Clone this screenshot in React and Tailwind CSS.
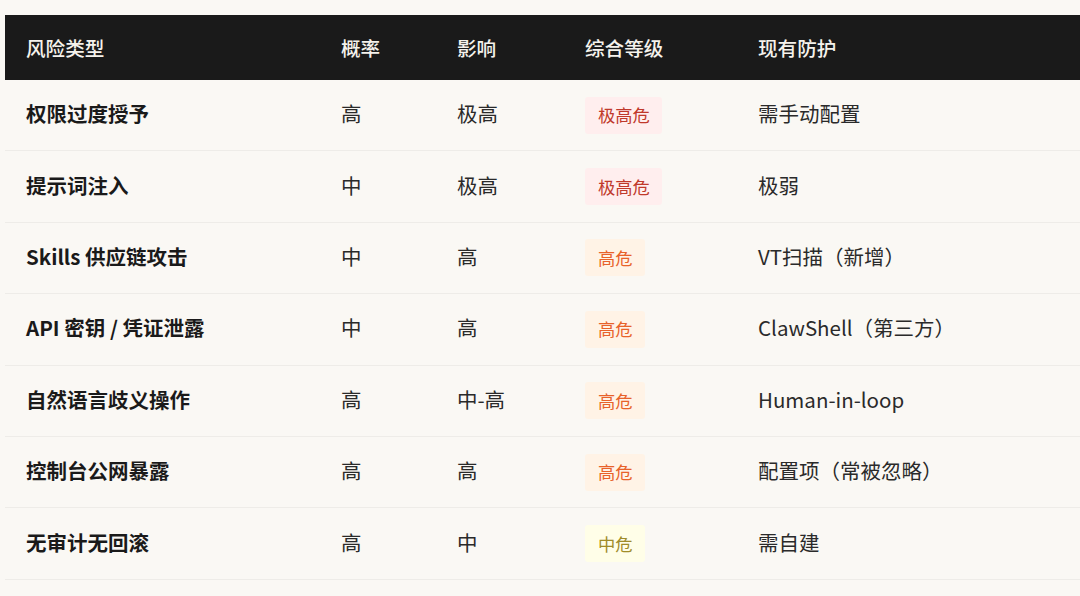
const rows = [
  ["权限过度授予", "高", "极高", "极高危", "text-[#c0392b] bg-[#ffeeee]", "需手动配置"],
  ["提示词注入", "中", "极高", "极高危", "text-[#c0392b] bg-[#ffeeee]", "极弱"],
  ["Skills 供应链攻击", "中", "高", "高危", "text-[#e8622a] bg-[#fff3e6]", "VT扫描（新增）"],
  ["API 密钥 / 凭证泄露", "中", "高", "高危", "text-[#e8622a] bg-[#fff3e6]", "ClawShell（第三方）"],
  ["自然语言歧义操作", "高", "中-高", "高危", "text-[#e8622a] bg-[#fff3e6]", "Human-in-loop"],
  ["控制台公网暴露", "高", "高", "高危", "text-[#e8622a] bg-[#fff3e6]", "配置项（常被忽略）"],
  ["无审计无回滚", "高", "中", "中危", "text-[#a08c2a] bg-[#fffee8]", "需自建"],
];

const heads = ["风险类型", "概率", "影响", "综合等级", "现有防护"];

export default function App() {
  return (
    <div className="h-[596px] w-[1080px] overflow-hidden bg-[#faf8f4] pt-[15px] pl-[5px] font-['Noto_Sans_CJK_SC',sans-serif] text-[20.5px] text-[#2a2a2a]">
      <table className="w-[1075px] table-fixed border-separate border-spacing-0 text-left">
        <colgroup>
          <col className="w-[315px]" />
          <col className="w-[116px]" />
          <col className="w-[128px]" />
          <col className="w-[173px]" />
          <col />
        </colgroup>
        <thead>
          <tr className="h-[65px] bg-[#1a1a1a] text-[#f5f2ec]">
            {heads.map((h) => (
              <th key={h} className="pl-[21px] text-[19.6px] font-medium">
                {h}
              </th>
            ))}
          </tr>
        </thead>
        <tbody>
          {rows.map((r) => (
            <tr key={r[0]} className="h-[71.4px]">
              <td className="border-b border-[#eeece8] pb-[3px] pl-[21px] font-bold text-[#1a1a1a]">{r[0]}</td>
              <td className="border-b border-[#eeece8] pb-[3px] pl-[21px]">{r[1]}</td>
              <td className="border-b border-[#eeece8] pb-[3px] pl-[21px]">{r[2]}</td>
              <td className="border-b border-[#eeece8] pl-[21px]">
                <span className={`inline-block rounded-[3px] py-[5.5px] pr-[12px] pl-[13px] text-[17.3px] leading-[26px] ${r[4]}`}>
                  {r[3]}
                </span>
              </td>
              <td className="border-b border-[#eeece8] pb-[3px] pl-[21px]">{r[5]}</td>
            </tr>
          ))}
        </tbody>
      </table>
    </div>
  );
}
